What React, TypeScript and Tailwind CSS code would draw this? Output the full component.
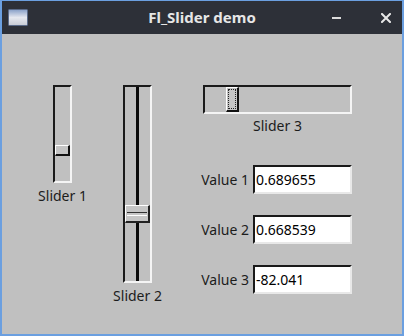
import React from "react";

const font = { fontFamily: '"Noto Sans", "Open Sans", sans-serif' };

function VSliderThin() {
  return (
    <div className="relative w-[19px] h-[98px] border-t-2 border-l-2 border-t-[#1a1a1a] border-l-[#1a1a1a] border-b-2 border-r-2 border-b-[#f4f4f4] border-r-[#f4f4f4] bg-[#c0c0c0]">
      <div className="absolute left-0 right-0 top-[58px] h-[11px] border-t border-l border-t-white border-l-white border-b-2 border-r-2 border-b-[#111] border-r-[#111] bg-[#c4c4c4]" />
    </div>
  );
}

function VSliderNice() {
  return (
    <div className="relative w-[29px] h-[198px] border-t-2 border-l-2 border-t-[#1a1a1a] border-l-[#1a1a1a] border-b-2 border-r-2 border-b-[#f4f4f4] border-r-[#f4f4f4] bg-[#c0c0c0]">
      <div className="absolute top-0 bottom-0 left-[11px] w-[3px] bg-[#0a0a0a]" />
      <div className="absolute left-0 right-0 top-[118px] h-[18px] border-t border-l border-t-white border-l-white border-b-2 border-r-2 border-b-[#222] border-r-[#222] bg-[#c6c6c6] flex items-center justify-center">
        <div className="w-[20px] h-[4px] border-t border-t-[#333] border-b border-b-white" />
      </div>
    </div>
  );
}

function HSlider() {
  return (
    <div className="relative w-[149px] h-[29px] border-t-2 border-l-2 border-t-[#1a1a1a] border-l-[#1a1a1a] border-b-2 border-r-2 border-b-[#f4f4f4] border-r-[#f4f4f4] bg-[#c0c0c0]">
      <div className="absolute top-0 bottom-0 left-[21px] w-[13px] border-t border-l border-t-white border-l-white border-b-2 border-r-2 border-b-[#111] border-r-[#111] bg-[#c4c4c4] p-[1px]">
        <div className="w-full h-full border border-dotted border-[#222]" />
      </div>
    </div>
  );
}

function ValueRow({ label, value, mt }: { label: string; value: string; mt: string }) {
  return (
    <div className={`flex items-center justify-end gap-[4px] ${mt}`}>
      <span className="shrink-0 whitespace-nowrap text-[14px] leading-[19px] text-[#1c1c1c]">{label}</span>
      <div className="shrink-0 w-[99px] h-[29px] bg-white border-t-2 border-l-2 border-t-[#1a1a1a] border-l-[#1a1a1a] border-b-2 border-r-2 border-b-[#e8e8e8] border-r-[#e8e8e8] flex items-center pl-[1px]">
        <span className="text-[14px] leading-[19px] text-black">{value}</span>
      </div>
    </div>
  );
}

export default function App() {
  return (
    <div style={font} className="w-[404px] h-[336px] bg-[#6b9fe0] pt-[1px] px-[2px] pb-[2px] flex flex-col">
      <div className="h-[33px] bg-[#2d3038] flex items-center relative shrink-0">
        <div className="ml-[6px] w-[20px] h-[17px] rounded-[1px] bg-gradient-to-b from-[#8da3c9] via-[#e6e8ef] to-[#c9cdd6] border border-[#5a6a88]" />
        <div className="absolute inset-0 flex items-center justify-center">
          <span className="text-[15px] font-bold text-[#e6e6e6]">Fl_Slider demo</span>
        </div>
        <div className="ml-auto flex items-center">
          <div className="w-[9px] h-[2px] bg-[#dcdcdc] mr-[40px]" />
          <svg width="10" height="10" viewBox="0 0 10 10" className="mr-[11px]">
            <path d="M1 1 L9 9 M9 1 L1 9" stroke="#e8e8e8" strokeWidth="2" strokeLinecap="square" />
          </svg>
        </div>
      </div>
      <div className="flex-1 bg-[#c0c0c0] flex items-start pl-[51px] pt-[51px]">
        <div className="w-[19px] flex flex-col items-center">
          <VSliderThin />
          <span className="mt-[3px] text-[14px] leading-[19px] text-[#1c1c1c] whitespace-nowrap">Slider 1</span>
        </div>
        <div className="ml-[51px] w-[29px] flex flex-col items-center">
          <VSliderNice />
          <span className="mt-[3px] text-[14px] leading-[19px] text-[#1c1c1c] whitespace-nowrap">Slider 2</span>
        </div>
        <div className="ml-[51px] w-[149px] flex flex-col">
          <HSlider />
          <span className="mt-[2px] text-[14px] leading-[19px] text-[#1c1c1c] text-center whitespace-nowrap">Slider 3</span>
          <ValueRow label="Value 1" value="0.689655" mt="mt-[30px]" />
          <ValueRow label="Value 2" value="0.668539" mt="mt-[21px]" />
          <ValueRow label="Value 3" value="-82.041" mt="mt-[21px]" />
        </div>
      </div>
    </div>
  );
}
